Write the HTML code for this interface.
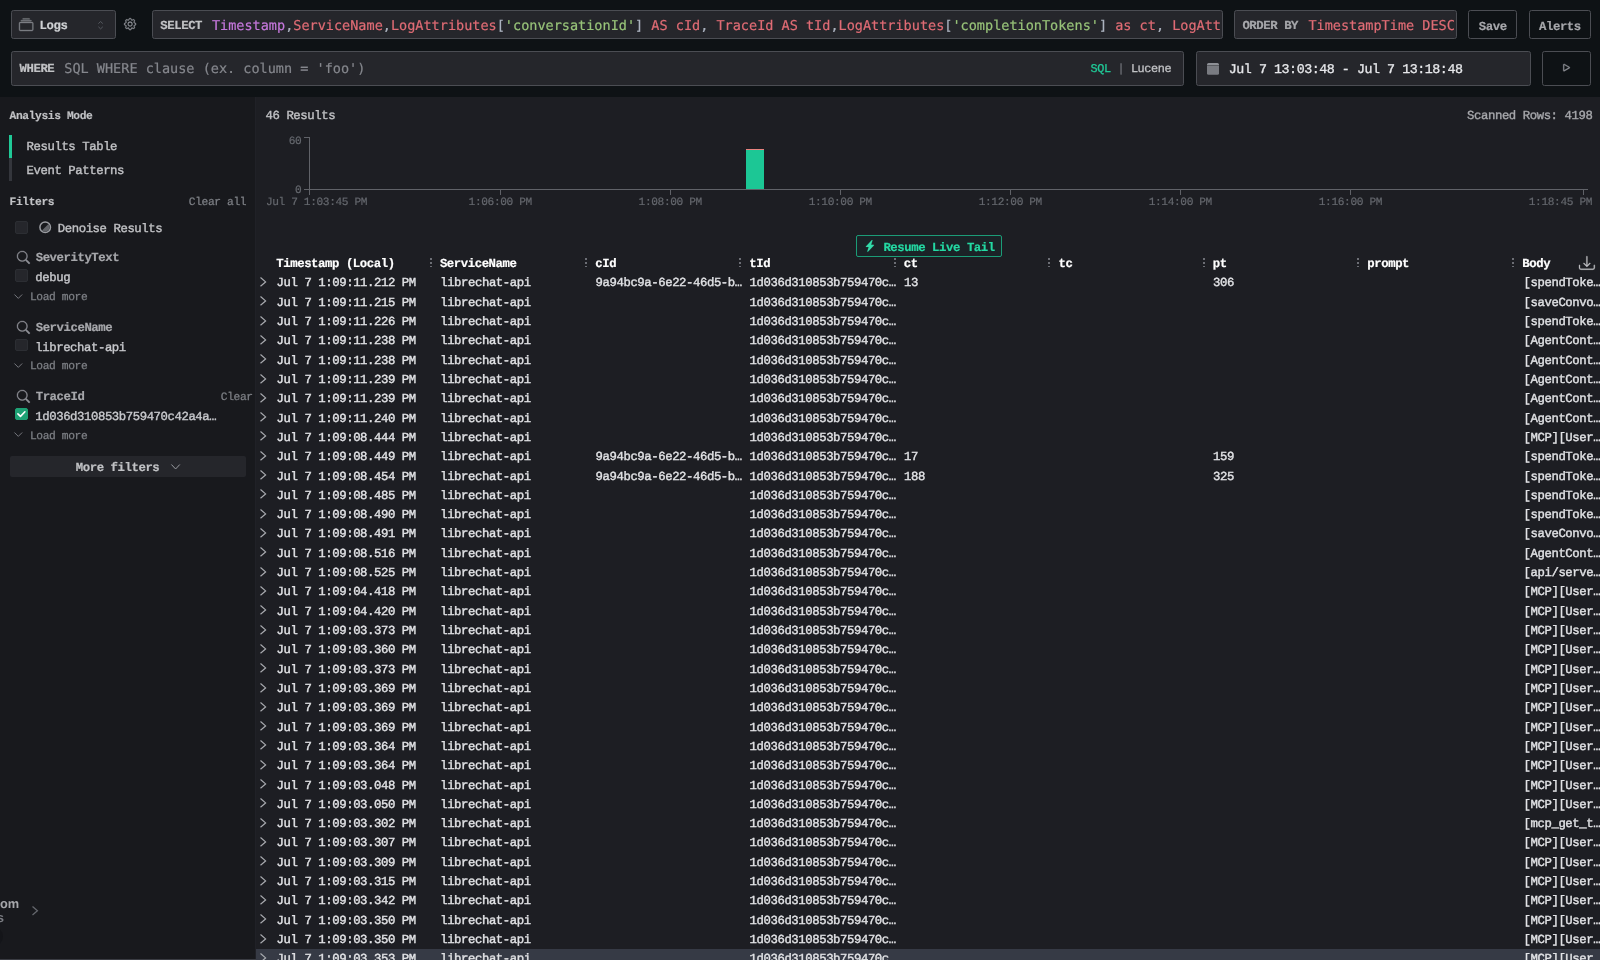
<!DOCTYPE html>
<html lang="en"><head><meta charset="utf-8"><title>Logs</title>
<style>
*{box-sizing:border-box;margin:0;padding:0}
html,body{width:1600px;height:960px;overflow:hidden;background:#0e1215}
body{position:relative;font-family:"Liberation Mono","DejaVu Sans Mono",monospace;color:#e2e3e6;text-rendering:geometricPrecision}
.t{position:absolute;white-space:pre}
.n{font-size:12.3px;letter-spacing:-.42px;line-height:14px;-webkit-text-stroke:.38px}
.b{font-size:12.3px;letter-spacing:-.42px;line-height:14px;font-weight:700;-webkit-text-stroke:.2px}
.s{font-size:11.27px;letter-spacing:-.385px;line-height:13px;-webkit-text-stroke:.25px}
.sb{font-size:11.27px;letter-spacing:-.385px;line-height:13px;font-weight:700;-webkit-text-stroke:.15px}
.d{font-size:13.33px;letter-spacing:-.46px;line-height:15px;-webkit-text-stroke:.3px}
.l{font-size:11.18px;letter-spacing:-.38px;line-height:13px;-webkit-text-stroke:.2px}
.q{font-size:11.87px;letter-spacing:-.40px;line-height:14px;-webkit-text-stroke:.3px}
.code{font-family:"DejaVu Sans Mono","Liberation Mono",monospace;font-size:13.53px;line-height:16px;-webkit-text-stroke:.2px}
.box{position:absolute;background:#25262b;border:1px solid #4b4d53;border-radius:2.5px}
.btn{position:absolute;background:#0e1215;border:1px solid #4b4d53;border-radius:2.5px}
#side{position:absolute;left:0;top:96.6px;width:255px;height:863.4px;background:#18191d}
#main{position:absolute;left:255px;top:96.6px;width:1345px;height:863.4px;background:#1d1e23}
.kw{color:#c678dd}.id{color:#e06c75}.st{color:#98c379}.pl{color:#abb2bf}
.g{color:#7e8086}
.chk{position:absolute;width:12.8px;height:12.6px;border-radius:2px;background:#25262b;border:1px solid #2c2e33}
svg{position:absolute;overflow:visible}
#app{position:absolute;left:0;top:0;width:1600px;height:960px;will-change:transform}
</style></head>
<body>
<div id="bg">
<div id="side"></div><div id="main"></div>
<div style="position:absolute;left:254.6px;top:96.6px;width:1.2px;height:863.4px;background:#202127"></div>
<div class="box" style="left:11.3px;top:10.2px;width:104.5px;height:28.8px"></div>
<div class="box" style="left:152px;top:10.2px;width:1070.8px;height:28.8px"></div>
<div class="box" style="left:1234px;top:10.2px;width:222.9px;height:28.8px"></div>
<div class="btn" style="left:1468.4px;top:10.2px;width:48.5px;height:28.8px"></div>
<div class="btn" style="left:1529.1px;top:10.2px;width:62px;height:28.8px"></div>
<div class="box" style="left:11.3px;top:50.5px;width:1173px;height:35.4px"></div>
<div class="box" style="left:1196.3px;top:50.5px;width:334.6px;height:35.4px"></div>
<div class="btn" style="left:1542.3px;top:50.5px;width:48.7px;height:35.4px"></div>
<div style="position:absolute;left:9.2px;top:135px;width:2.4px;height:45.8px;background:#34363c"></div>
<div style="position:absolute;left:9.2px;top:135px;width:2.4px;height:23px;background:#20c997"></div>
<div class="chk" style="left:15.2px;top:221px"></div>
<div class="chk" style="left:15.1px;top:269.0px"></div>
<div class="chk" style="left:15.1px;top:338.5px"></div>
<div class="chk" style="left:15.1px;top:407.9px;background:#1ea175;border-color:#1ea175"></div>
<div style="position:absolute;left:9.7px;top:456.3px;width:236.1px;height:20.7px;background:#25262b;border-radius:2px"></div>
<div style="position:absolute;left:-16px;top:927px;width:18.5px;height:18.5px;border-radius:10px;background:#141519"></div>
<div style="position:absolute;left:0;top:958.6px;width:1600px;height:1.4px;background:#3a3c43"></div>
<div style="position:absolute;left:308.5px;top:137px;width:1.1px;height:58px;background:#606268"></div>
<div style="position:absolute;left:303.8px;top:188.5px;width:1284px;height:1.1px;background:#606268"></div>
<div style="position:absolute;left:303.8px;top:137px;width:5px;height:1.1px;background:#606268"></div>
<div style="position:absolute;left:499.8px;top:189px;width:1.1px;height:6px;background:#606268"></div>
<div style="position:absolute;left:669.8px;top:189px;width:1.1px;height:6px;background:#606268"></div>
<div style="position:absolute;left:839.9px;top:189px;width:1.1px;height:6px;background:#606268"></div>
<div style="position:absolute;left:1009.9px;top:189px;width:1.1px;height:6px;background:#606268"></div>
<div style="position:absolute;left:1179.9px;top:189px;width:1.1px;height:6px;background:#606268"></div>
<div style="position:absolute;left:1350.0px;top:189px;width:1.1px;height:6px;background:#606268"></div>
<div style="position:absolute;left:1582.9px;top:189px;width:1.1px;height:6px;background:#606268"></div>
<div style="position:absolute;left:746.3px;top:148.8px;width:17.5px;height:40.6px;background:#1cc795"></div>
<div style="position:absolute;left:746.3px;top:148.8px;width:17.5px;height:1px;background:#e8837f"></div>
<div style="position:absolute;left:856.3px;top:234.6px;width:145.7px;height:22.2px;background:#1b2327;border:1px solid #1b9c77;border-radius:2px"></div>
<div style="position:absolute;left:429.7px;top:257.8px;width:2px;height:9.6px;background:repeating-linear-gradient(#6c6e75 0 2px,transparent 2px 3.8px)"></div>
<div style="position:absolute;left:585.1px;top:257.8px;width:2px;height:9.6px;background:repeating-linear-gradient(#6c6e75 0 2px,transparent 2px 3.8px)"></div>
<div style="position:absolute;left:739.1px;top:257.8px;width:2px;height:9.6px;background:repeating-linear-gradient(#6c6e75 0 2px,transparent 2px 3.8px)"></div>
<div style="position:absolute;left:893.5px;top:257.8px;width:2px;height:9.6px;background:repeating-linear-gradient(#6c6e75 0 2px,transparent 2px 3.8px)"></div>
<div style="position:absolute;left:1048.4px;top:257.8px;width:2px;height:9.6px;background:repeating-linear-gradient(#6c6e75 0 2px,transparent 2px 3.8px)"></div>
<div style="position:absolute;left:1202.6px;top:257.8px;width:2px;height:9.6px;background:repeating-linear-gradient(#6c6e75 0 2px,transparent 2px 3.8px)"></div>
<div style="position:absolute;left:1357.1px;top:257.8px;width:2px;height:9.6px;background:repeating-linear-gradient(#6c6e75 0 2px,transparent 2px 3.8px)"></div>
<div style="position:absolute;left:1512.1px;top:257.8px;width:2px;height:9.6px;background:repeating-linear-gradient(#6c6e75 0 2px,transparent 2px 3.8px)"></div>
<div style="position:absolute;left:256px;top:948.7px;width:1344px;height:20px;background:#363a45"></div>
</div>
<div id="app">
<svg style="left:18.70px;top:17.60px" width="14.30" height="14.30" viewBox="0 0 16 16" fill="#7c7e84" stroke="#7c7e84" stroke-width="0.45"><path d="M2.5 3.5a.5.5 0 0 1 0-1h11a.5.5 0 0 1 0 1h-11zm2-2a.5.5 0 0 1 0-1h7a.5.5 0 0 1 0 1h-7zM0 13a1.5 1.5 0 0 0 1.5 1.5h13A1.5 1.5 0 0 0 16 13V6a1.5 1.5 0 0 0-1.5-1.5h-13A1.5 1.5 0 0 0 0 6v7zm1.5.5A.5.5 0 0 1 1 13V6a.5.5 0 0 1 .5-.5h13a.5.5 0 0 1 .5.5v7a.5.5 0 0 1-.5.5h-13z"/></svg>
<div class="t b " style="left:39.60px;top:19px;color:#cfd1d4">Logs</div>
<svg style="left:98.2px;top:20.8px" width="5.2" height="8.4" viewBox="0 0 5.2 8.4" fill="none" stroke="#5c5f66" stroke-width=".9"><path d="M.4 2.6 2.6.5 4.8 2.6M.4 5.8 2.6 7.9 4.8 5.8"/></svg>
<svg style="left:123.70px;top:18.30px" width="12.20" height="12.20" viewBox="0 0 16 16" fill="#8e9096" stroke="#8e9096" stroke-width="0.45"><path d="M8 4.754a3.246 3.246 0 1 0 0 6.492 3.246 3.246 0 0 0 0-6.492zM5.754 8a2.246 2.246 0 1 1 4.492 0 2.246 2.246 0 0 1-4.492 0z"/><path d="M9.796 1.343c-.527-1.79-3.065-1.79-3.592 0l-.094.319a.873.873 0 0 1-1.255.52l-.292-.16c-1.64-.892-3.433.902-2.54 2.541l.159.292a.873.873 0 0 1-.52 1.255l-.319.094c-1.79.527-1.79 3.065 0 3.592l.319.094a.873.873 0 0 1 .52 1.255l-.16.292c-.892 1.64.901 3.434 2.541 2.54l.292-.159a.873.873 0 0 1 1.255.52l.094.319c.527 1.79 3.065 1.79 3.592 0l.094-.319a.873.873 0 0 1 1.255-.52l.292.16c1.64.893 3.434-.902 2.54-2.541l-.159-.292a.873.873 0 0 1 .52-1.255l.319-.094c1.79-.527 1.79-3.065 0-3.592l-.319-.094a.873.873 0 0 1-.52-1.255l.16-.292c.893-1.64-.902-3.433-2.541-2.54l-.292.159a.873.873 0 0 1-1.255-.52l-.094-.319zm-2.633.283c.246-.835 1.428-.835 1.674 0l.094.319a1.873 1.873 0 0 0 2.693 1.115l.291-.16c.764-.415 1.6.42 1.184 1.185l-.159.292a1.873 1.873 0 0 0 1.116 2.692l.318.094c.835.246.835 1.428 0 1.674l-.319.094a1.873 1.873 0 0 0-1.115 2.693l.16.291c.415.764-.42 1.6-1.185 1.184l-.291-.159a1.873 1.873 0 0 0-2.693 1.116l-.094.318c-.246.835-1.428.835-1.674 0l-.094-.319a1.873 1.873 0 0 0-2.692-1.115l-.292.16c-.764.415-1.6-.42-1.184-1.185l.159-.291A1.873 1.873 0 0 0 1.945 8.93l-.319-.094c-.835-.246-.835-1.428 0-1.674l.319-.094A1.873 1.873 0 0 0 3.06 4.377l-.16-.292c-.415-.764.42-1.6 1.185-1.184l.292.159a1.873 1.873 0 0 0 2.692-1.115l.094-.319z"/></svg>
<div class="t b " style="left:160.30px;top:19px;color:#c1c2c5">SELECT</div>
<div class="t code " style="left:211.90px;top:18px;width:1010.5px;overflow:hidden"><span class="kw">Timestamp</span><span class="pl">,</span><span class="id">ServiceName</span><span class="pl">,</span><span class="id">LogAttributes</span><span class="pl">[</span><span class="st">'conversationId'</span><span class="pl">]</span><span class="id"> AS cId</span><span class="pl">,</span><span class="id"> TraceId AS tId</span><span class="pl">,</span><span class="id">LogAttributes</span><span class="pl">[</span><span class="st">'completionTokens'</span><span class="pl">]</span><span class="id"> as ct</span><span class="pl">,</span><span class="id"> LogAtt</span></div>
<div class="t b " style="left:1242.40px;top:19px;color:#a6a7ab">ORDER BY</div>
<div class="t code id" style="left:1308.40px;top:18px;">TimestampTime DESC</div>
<div class="t b " style="left:1478.80px;top:20px;color:#a6a7ab">Save</div>
<div class="t b " style="left:1539.00px;top:20px;color:#a6a7ab">Alerts</div>
<div class="t b " style="left:19.50px;top:62px;color:#c1c2c5">WHERE</div>
<div class="t code " style="left:64.30px;top:61px;color:#85878d">SQL WHERE clause (ex. column = 'foo')</div>
<div class="t q " style="left:1090.60px;top:62px;"><span style="color:#20c997">SQL</span><span style="color:#6c6f75"> | </span><span style="color:#c1c2c5">Lucene</span></div>
<svg style="left:1207.3px;top:62.7px" width="12" height="11.8" viewBox="0 0 12 11.8"><path d="M1.6 0h8.8A1.6 1.6 0 0 1 12 1.6V2.5H0V1.6A1.6 1.6 0 0 1 1.6 0z" fill="#8e9096"/><path d="M0 3.1h12v7.1a1.6 1.6 0 0 1-1.6 1.6H1.6A1.6 1.6 0 0 1 0 10.2z" fill="#797b81"/></svg>
<div class="t d " style="left:1228.80px;top:63px;color:#e6e7ea">Jul 7 13:03:48 - Jul 7 13:18:48</div>
<svg style="left:1559.60px;top:61.40px" width="13.20" height="13.20" viewBox="0 0 16 16" fill="#8e9096" stroke="#8e9096" stroke-width="0.45"><path d="M10.804 8 5 4.633v6.734L10.804 8zm.792-.696a.802.802 0 0 1 0 1.392l-6.363 3.692C4.713 12.69 4 12.345 4 11.692V4.308c0-.653.713-.998 1.233-.696l6.363 3.692z"/></svg>
<div class="t sb " style="left:9.50px;top:111px;color:#c1c2c5">Analysis Mode</div>
<div class="t n " style="left:26.60px;top:140px;color:#c1c2c5">Results Table</div>
<div class="t n " style="left:26.60px;top:164px;color:#c1c2c5">Event Patterns</div>
<div class="t sb " style="left:9.50px;top:197px;color:#c1c2c5">Filters</div>
<div class="t s g" style="left:188.80px;top:197px;">Clear all</div>
<svg style="left:39px;top:221.4px" width="12.4" height="12.4" viewBox="0 0 12.4 12.4"><circle cx="6.2" cy="6.2" r="5.3" fill="none" stroke="#9a9ca1" stroke-width="1.5"/><path d="M2.9 9.5A4.67 4.67 0 0 0 9.5 2.9z" fill="#626469"/></svg>
<div class="t n " style="left:57.80px;top:222px;color:#c1c2c5">Denoise Results</div>
<svg style="left:17.10px;top:251.20px" width="12.90" height="12.90" viewBox="0 0 16 16" fill="#8e9096" stroke="#8e9096" stroke-width="0.45"><path d="M11.742 10.344a6.5 6.5 0 1 0-1.397 1.398h-.001c.03.04.062.078.098.115l3.85 3.85a1 1 0 0 0 1.415-1.414l-3.85-3.85a1.007 1.007 0 0 0-.115-.1zM12 6.5a5.5 5.5 0 1 1-11 0 5.5 5.5 0 0 1 11 0z"/></svg>
<div class="t b " style="left:35.70px;top:251px;color:#a6a7ab">SeverityText</div>
<div class="t n " style="left:35.30px;top:271px;color:#c8c9cd">debug</div>
<svg style="left:14.3px;top:293.50px" width="8.6" height="5.2" viewBox="0 0 8.6 5.2" fill="none" stroke="#7c7e84" stroke-width=".95"><path d="M.4.5 4.3 4.4 8.2.5"/></svg>
<div class="t s g" style="left:29.90px;top:292px;">Load more</div>
<svg style="left:17.10px;top:320.70px" width="12.90" height="12.90" viewBox="0 0 16 16" fill="#8e9096" stroke="#8e9096" stroke-width="0.45"><path d="M11.742 10.344a6.5 6.5 0 1 0-1.397 1.398h-.001c.03.04.062.078.098.115l3.85 3.85a1 1 0 0 0 1.415-1.414l-3.85-3.85a1.007 1.007 0 0 0-.115-.1zM12 6.5a5.5 5.5 0 1 1-11 0 5.5 5.5 0 0 1 11 0z"/></svg>
<div class="t b " style="left:35.70px;top:321px;color:#a6a7ab">ServiceName</div>
<div class="t n " style="left:35.30px;top:341px;color:#c8c9cd">librechat-api</div>
<svg style="left:14.3px;top:363.00px" width="8.6" height="5.2" viewBox="0 0 8.6 5.2" fill="none" stroke="#7c7e84" stroke-width=".95"><path d="M.4.5 4.3 4.4 8.2.5"/></svg>
<div class="t s g" style="left:29.90px;top:361px;">Load more</div>
<svg style="left:17.10px;top:390.10px" width="12.90" height="12.90" viewBox="0 0 16 16" fill="#8e9096" stroke="#8e9096" stroke-width="0.45"><path d="M11.742 10.344a6.5 6.5 0 1 0-1.397 1.398h-.001c.03.04.062.078.098.115l3.85 3.85a1 1 0 0 0 1.415-1.414l-3.85-3.85a1.007 1.007 0 0 0-.115-.1zM12 6.5a5.5 5.5 0 1 1-11 0 5.5 5.5 0 0 1 11 0z"/></svg>
<div class="t b " style="left:35.70px;top:390px;color:#a6a7ab">TraceId</div>
<div class="t n " style="left:35.30px;top:410px;color:#c8c9cd">1d036d310853b759470c42a4a…</div>
<svg style="left:15.1px;top:407.9px" width="12.8" height="12.6" viewBox="0 0 12.8 12.6" fill="none" stroke="#fff" stroke-width="1.6" stroke-linecap="round" stroke-linejoin="round"><path d="M2.9 5.9 5.5 8.4 9.9 3.8"/></svg>
<svg style="left:14.3px;top:432.40px" width="8.6" height="5.2" viewBox="0 0 8.6 5.2" fill="none" stroke="#7c7e84" stroke-width=".95"><path d="M.4.5 4.3 4.4 8.2.5"/></svg>
<div class="t s g" style="left:29.90px;top:431px;">Load more</div>
<div class="t s g" style="left:220.80px;top:392px;">Clear</div>
<div class="t b " style="left:75.80px;top:461px;color:#c1c2c5">More filters</div>
<svg style="left:170.8px;top:464.2px" width="9.2" height="5.8" viewBox="0 0 9.2 5.8" fill="none" stroke="#9a9ca1" stroke-width="1"><path d="M.4.5 4.6 5 8.8.5"/></svg>
<div class="t x" style="left:0;top:897px;font-family:'Liberation Sans',sans-serif;font-weight:700;font-size:12.8px;line-height:14px;color:#a6a7ab">om</div>
<div class="t x" style="left:-3.2px;top:910.5px;font-family:'Liberation Sans',sans-serif;font-weight:700;font-size:13px;line-height:14px;color:#7a7c82">s</div>
<svg style="left:32px;top:906px" width="6" height="9.4" viewBox="0 0 6 9.4" fill="none" stroke="#64676d" stroke-width="1.3"><path d="M.5.5 5.4 4.7.5 8.9"/></svg>
<div class="t n " style="left:265.50px;top:109px;color:#c1c2c5">46 Results</div>
<div class="t n " style="left:1467.10px;top:109px;color:#a6a7ab">Scanned Rows: 4198</div>
<div class="t l " style="left:288.80px;top:136px;color:#64676d">60</div>
<div class="t l " style="left:295.10px;top:185px;color:#64676d">0</div>
<div class="t l " style="left:265.90px;top:197px;color:#64676d">Jul 7 1:03:45 PM</div>
<div class="t l " style="left:468.60px;top:197px;color:#64676d">1:06:00 PM</div>
<div class="t l " style="left:638.60px;top:197px;color:#64676d">1:08:00 PM</div>
<div class="t l " style="left:808.70px;top:197px;color:#64676d">1:10:00 PM</div>
<div class="t l " style="left:978.70px;top:197px;color:#64676d">1:12:00 PM</div>
<div class="t l " style="left:1148.70px;top:197px;color:#64676d">1:14:00 PM</div>
<div class="t l " style="left:1318.80px;top:197px;color:#64676d">1:16:00 PM</div>
<div class="t l " style="left:1528.80px;top:197px;color:#64676d">1:18:45 PM</div>
<svg style="left:863.90px;top:239.70px" width="11.80" height="11.80" viewBox="0 0 16 16" fill="#33dcaa" stroke="#33dcaa" stroke-width="0.2"><path d="M11.251.068a.5.5 0 0 1 .227.58L9.677 6.5H13a.5.5 0 0 1 .364.843l-8 8.5a.5.5 0 0 1-.842-.49L6.323 9.5H3a.5.5 0 0 1-.364-.843l8-8.5a.5.5 0 0 1 .615-.09z"/></svg>
<div class="t b " style="left:883.40px;top:241px;color:#24d9a3">Resume Live Tail</div>
<div class="t b " style="left:276.30px;top:257px;color:#fff">Timestamp (Local)</div>
<div class="t b " style="left:439.90px;top:257px;color:#fff">ServiceName</div>
<div class="t b " style="left:595.30px;top:257px;color:#fff">cId</div>
<div class="t b " style="left:749.30px;top:257px;color:#fff">tId</div>
<div class="t b " style="left:903.70px;top:257px;color:#fff">ct</div>
<div class="t b " style="left:1058.60px;top:257px;color:#fff">tc</div>
<div class="t b " style="left:1212.80px;top:257px;color:#fff">pt</div>
<div class="t b " style="left:1367.30px;top:257px;color:#fff">prompt</div>
<div class="t b " style="left:1522.30px;top:257px;color:#fff">Body</div>
<svg style="left:1579.20px;top:255.00px" width="15.80" height="15.80" viewBox="0 0 16 16" fill="#c1c2c5" stroke="#c1c2c5" stroke-width="0.3"><path d="M.5 9.9a.5.5 0 0 1 .5.5v2.5a1 1 0 0 0 1 1h12a1 1 0 0 0 1-1v-2.5a.5.5 0 0 1 1 0v2.5a2 2 0 0 1-2 2H2a2 2 0 0 1-2-2v-2.5a.5.5 0 0 1 .5-.5z"/><path d="M7.646 11.854a.5.5 0 0 0 .708 0l3-3a.5.5 0 0 0-.708-.708L8.5 10.293V1.5a.5.5 0 0 0-1 0v8.793L5.354 8.146a.5.5 0 1 0-.708.708l3 3z"/></svg>
<svg style="left:260.1px;top:277.00px" width="6.2" height="9.8" viewBox="0 0 6.2 9.8" fill="none" stroke="#a9abb0" stroke-width="1.2"><path d="M.5.5 5.6 4.9.5 9.3"/></svg>
<div class="t n " style="left:276.60px;top:276px;">Jul 7 1:09:11.212 PM</div>
<div class="t n " style="left:440.20px;top:276px;">librechat-api</div>
<div class="t n " style="left:595.60px;top:276px;">9a94bc9a-6e22-46d5-b…</div>
<div class="t n " style="left:904.00px;top:276px;">13</div>
<div class="t n " style="left:1213.10px;top:276px;">306</div>
<div class="t n " style="left:749.60px;top:276px;">1d036d310853b759470c…</div>
<div class="t n " style="left:1523.60px;top:276px;">[spendToke…</div>
<svg style="left:260.1px;top:296.31px" width="6.2" height="9.8" viewBox="0 0 6.2 9.8" fill="none" stroke="#a9abb0" stroke-width="1.2"><path d="M.5.5 5.6 4.9.5 9.3"/></svg>
<div class="t n " style="left:276.60px;top:296px;">Jul 7 1:09:11.215 PM</div>
<div class="t n " style="left:440.20px;top:296px;">librechat-api</div>
<div class="t n " style="left:749.60px;top:296px;">1d036d310853b759470c…</div>
<div class="t n " style="left:1523.60px;top:296px;">[saveConvo…</div>
<svg style="left:260.1px;top:315.62px" width="6.2" height="9.8" viewBox="0 0 6.2 9.8" fill="none" stroke="#a9abb0" stroke-width="1.2"><path d="M.5.5 5.6 4.9.5 9.3"/></svg>
<div class="t n " style="left:276.60px;top:315px;">Jul 7 1:09:11.226 PM</div>
<div class="t n " style="left:440.20px;top:315px;">librechat-api</div>
<div class="t n " style="left:749.60px;top:315px;">1d036d310853b759470c…</div>
<div class="t n " style="left:1523.60px;top:315px;">[spendToke…</div>
<svg style="left:260.1px;top:334.93px" width="6.2" height="9.8" viewBox="0 0 6.2 9.8" fill="none" stroke="#a9abb0" stroke-width="1.2"><path d="M.5.5 5.6 4.9.5 9.3"/></svg>
<div class="t n " style="left:276.60px;top:334px;">Jul 7 1:09:11.238 PM</div>
<div class="t n " style="left:440.20px;top:334px;">librechat-api</div>
<div class="t n " style="left:749.60px;top:334px;">1d036d310853b759470c…</div>
<div class="t n " style="left:1523.60px;top:334px;">[AgentCont…</div>
<svg style="left:260.1px;top:354.24px" width="6.2" height="9.8" viewBox="0 0 6.2 9.8" fill="none" stroke="#a9abb0" stroke-width="1.2"><path d="M.5.5 5.6 4.9.5 9.3"/></svg>
<div class="t n " style="left:276.60px;top:354px;">Jul 7 1:09:11.238 PM</div>
<div class="t n " style="left:440.20px;top:354px;">librechat-api</div>
<div class="t n " style="left:749.60px;top:354px;">1d036d310853b759470c…</div>
<div class="t n " style="left:1523.60px;top:354px;">[AgentCont…</div>
<svg style="left:260.1px;top:373.55px" width="6.2" height="9.8" viewBox="0 0 6.2 9.8" fill="none" stroke="#a9abb0" stroke-width="1.2"><path d="M.5.5 5.6 4.9.5 9.3"/></svg>
<div class="t n " style="left:276.60px;top:373px;">Jul 7 1:09:11.239 PM</div>
<div class="t n " style="left:440.20px;top:373px;">librechat-api</div>
<div class="t n " style="left:749.60px;top:373px;">1d036d310853b759470c…</div>
<div class="t n " style="left:1523.60px;top:373px;">[AgentCont…</div>
<svg style="left:260.1px;top:392.86px" width="6.2" height="9.8" viewBox="0 0 6.2 9.8" fill="none" stroke="#a9abb0" stroke-width="1.2"><path d="M.5.5 5.6 4.9.5 9.3"/></svg>
<div class="t n " style="left:276.60px;top:392px;">Jul 7 1:09:11.239 PM</div>
<div class="t n " style="left:440.20px;top:392px;">librechat-api</div>
<div class="t n " style="left:749.60px;top:392px;">1d036d310853b759470c…</div>
<div class="t n " style="left:1523.60px;top:392px;">[AgentCont…</div>
<svg style="left:260.1px;top:412.17px" width="6.2" height="9.8" viewBox="0 0 6.2 9.8" fill="none" stroke="#a9abb0" stroke-width="1.2"><path d="M.5.5 5.6 4.9.5 9.3"/></svg>
<div class="t n " style="left:276.60px;top:412px;">Jul 7 1:09:11.240 PM</div>
<div class="t n " style="left:440.20px;top:412px;">librechat-api</div>
<div class="t n " style="left:749.60px;top:412px;">1d036d310853b759470c…</div>
<div class="t n " style="left:1523.60px;top:412px;">[AgentCont…</div>
<svg style="left:260.1px;top:431.48px" width="6.2" height="9.8" viewBox="0 0 6.2 9.8" fill="none" stroke="#a9abb0" stroke-width="1.2"><path d="M.5.5 5.6 4.9.5 9.3"/></svg>
<div class="t n " style="left:276.60px;top:431px;">Jul 7 1:09:08.444 PM</div>
<div class="t n " style="left:440.20px;top:431px;">librechat-api</div>
<div class="t n " style="left:749.60px;top:431px;">1d036d310853b759470c…</div>
<div class="t n " style="left:1523.60px;top:431px;">[MCP][User…</div>
<svg style="left:260.1px;top:450.79px" width="6.2" height="9.8" viewBox="0 0 6.2 9.8" fill="none" stroke="#a9abb0" stroke-width="1.2"><path d="M.5.5 5.6 4.9.5 9.3"/></svg>
<div class="t n " style="left:276.60px;top:450px;">Jul 7 1:09:08.449 PM</div>
<div class="t n " style="left:440.20px;top:450px;">librechat-api</div>
<div class="t n " style="left:595.60px;top:450px;">9a94bc9a-6e22-46d5-b…</div>
<div class="t n " style="left:904.00px;top:450px;">17</div>
<div class="t n " style="left:1213.10px;top:450px;">159</div>
<div class="t n " style="left:749.60px;top:450px;">1d036d310853b759470c…</div>
<div class="t n " style="left:1523.60px;top:450px;">[spendToke…</div>
<svg style="left:260.1px;top:470.10px" width="6.2" height="9.8" viewBox="0 0 6.2 9.8" fill="none" stroke="#a9abb0" stroke-width="1.2"><path d="M.5.5 5.6 4.9.5 9.3"/></svg>
<div class="t n " style="left:276.60px;top:470px;">Jul 7 1:09:08.454 PM</div>
<div class="t n " style="left:440.20px;top:470px;">librechat-api</div>
<div class="t n " style="left:595.60px;top:470px;">9a94bc9a-6e22-46d5-b…</div>
<div class="t n " style="left:904.00px;top:470px;">188</div>
<div class="t n " style="left:1213.10px;top:470px;">325</div>
<div class="t n " style="left:749.60px;top:470px;">1d036d310853b759470c…</div>
<div class="t n " style="left:1523.60px;top:470px;">[spendToke…</div>
<svg style="left:260.1px;top:489.41px" width="6.2" height="9.8" viewBox="0 0 6.2 9.8" fill="none" stroke="#a9abb0" stroke-width="1.2"><path d="M.5.5 5.6 4.9.5 9.3"/></svg>
<div class="t n " style="left:276.60px;top:489px;">Jul 7 1:09:08.485 PM</div>
<div class="t n " style="left:440.20px;top:489px;">librechat-api</div>
<div class="t n " style="left:749.60px;top:489px;">1d036d310853b759470c…</div>
<div class="t n " style="left:1523.60px;top:489px;">[spendToke…</div>
<svg style="left:260.1px;top:508.72px" width="6.2" height="9.8" viewBox="0 0 6.2 9.8" fill="none" stroke="#a9abb0" stroke-width="1.2"><path d="M.5.5 5.6 4.9.5 9.3"/></svg>
<div class="t n " style="left:276.60px;top:508px;">Jul 7 1:09:08.490 PM</div>
<div class="t n " style="left:440.20px;top:508px;">librechat-api</div>
<div class="t n " style="left:749.60px;top:508px;">1d036d310853b759470c…</div>
<div class="t n " style="left:1523.60px;top:508px;">[spendToke…</div>
<svg style="left:260.1px;top:528.03px" width="6.2" height="9.8" viewBox="0 0 6.2 9.8" fill="none" stroke="#a9abb0" stroke-width="1.2"><path d="M.5.5 5.6 4.9.5 9.3"/></svg>
<div class="t n " style="left:276.60px;top:527px;">Jul 7 1:09:08.491 PM</div>
<div class="t n " style="left:440.20px;top:527px;">librechat-api</div>
<div class="t n " style="left:749.60px;top:527px;">1d036d310853b759470c…</div>
<div class="t n " style="left:1523.60px;top:527px;">[saveConvo…</div>
<svg style="left:260.1px;top:547.34px" width="6.2" height="9.8" viewBox="0 0 6.2 9.8" fill="none" stroke="#a9abb0" stroke-width="1.2"><path d="M.5.5 5.6 4.9.5 9.3"/></svg>
<div class="t n " style="left:276.60px;top:547px;">Jul 7 1:09:08.516 PM</div>
<div class="t n " style="left:440.20px;top:547px;">librechat-api</div>
<div class="t n " style="left:749.60px;top:547px;">1d036d310853b759470c…</div>
<div class="t n " style="left:1523.60px;top:547px;">[AgentCont…</div>
<svg style="left:260.1px;top:566.65px" width="6.2" height="9.8" viewBox="0 0 6.2 9.8" fill="none" stroke="#a9abb0" stroke-width="1.2"><path d="M.5.5 5.6 4.9.5 9.3"/></svg>
<div class="t n " style="left:276.60px;top:566px;">Jul 7 1:09:08.525 PM</div>
<div class="t n " style="left:440.20px;top:566px;">librechat-api</div>
<div class="t n " style="left:749.60px;top:566px;">1d036d310853b759470c…</div>
<div class="t n " style="left:1523.60px;top:566px;">[api/serve…</div>
<svg style="left:260.1px;top:585.96px" width="6.2" height="9.8" viewBox="0 0 6.2 9.8" fill="none" stroke="#a9abb0" stroke-width="1.2"><path d="M.5.5 5.6 4.9.5 9.3"/></svg>
<div class="t n " style="left:276.60px;top:585px;">Jul 7 1:09:04.418 PM</div>
<div class="t n " style="left:440.20px;top:585px;">librechat-api</div>
<div class="t n " style="left:749.60px;top:585px;">1d036d310853b759470c…</div>
<div class="t n " style="left:1523.60px;top:585px;">[MCP][User…</div>
<svg style="left:260.1px;top:605.27px" width="6.2" height="9.8" viewBox="0 0 6.2 9.8" fill="none" stroke="#a9abb0" stroke-width="1.2"><path d="M.5.5 5.6 4.9.5 9.3"/></svg>
<div class="t n " style="left:276.60px;top:605px;">Jul 7 1:09:04.420 PM</div>
<div class="t n " style="left:440.20px;top:605px;">librechat-api</div>
<div class="t n " style="left:749.60px;top:605px;">1d036d310853b759470c…</div>
<div class="t n " style="left:1523.60px;top:605px;">[MCP][User…</div>
<svg style="left:260.1px;top:624.58px" width="6.2" height="9.8" viewBox="0 0 6.2 9.8" fill="none" stroke="#a9abb0" stroke-width="1.2"><path d="M.5.5 5.6 4.9.5 9.3"/></svg>
<div class="t n " style="left:276.60px;top:624px;">Jul 7 1:09:03.373 PM</div>
<div class="t n " style="left:440.20px;top:624px;">librechat-api</div>
<div class="t n " style="left:749.60px;top:624px;">1d036d310853b759470c…</div>
<div class="t n " style="left:1523.60px;top:624px;">[MCP][User…</div>
<svg style="left:260.1px;top:643.89px" width="6.2" height="9.8" viewBox="0 0 6.2 9.8" fill="none" stroke="#a9abb0" stroke-width="1.2"><path d="M.5.5 5.6 4.9.5 9.3"/></svg>
<div class="t n " style="left:276.60px;top:643px;">Jul 7 1:09:03.360 PM</div>
<div class="t n " style="left:440.20px;top:643px;">librechat-api</div>
<div class="t n " style="left:749.60px;top:643px;">1d036d310853b759470c…</div>
<div class="t n " style="left:1523.60px;top:643px;">[MCP][User…</div>
<svg style="left:260.1px;top:663.20px" width="6.2" height="9.8" viewBox="0 0 6.2 9.8" fill="none" stroke="#a9abb0" stroke-width="1.2"><path d="M.5.5 5.6 4.9.5 9.3"/></svg>
<div class="t n " style="left:276.60px;top:663px;">Jul 7 1:09:03.373 PM</div>
<div class="t n " style="left:440.20px;top:663px;">librechat-api</div>
<div class="t n " style="left:749.60px;top:663px;">1d036d310853b759470c…</div>
<div class="t n " style="left:1523.60px;top:663px;">[MCP][User…</div>
<svg style="left:260.1px;top:682.51px" width="6.2" height="9.8" viewBox="0 0 6.2 9.8" fill="none" stroke="#a9abb0" stroke-width="1.2"><path d="M.5.5 5.6 4.9.5 9.3"/></svg>
<div class="t n " style="left:276.60px;top:682px;">Jul 7 1:09:03.369 PM</div>
<div class="t n " style="left:440.20px;top:682px;">librechat-api</div>
<div class="t n " style="left:749.60px;top:682px;">1d036d310853b759470c…</div>
<div class="t n " style="left:1523.60px;top:682px;">[MCP][User…</div>
<svg style="left:260.1px;top:701.82px" width="6.2" height="9.8" viewBox="0 0 6.2 9.8" fill="none" stroke="#a9abb0" stroke-width="1.2"><path d="M.5.5 5.6 4.9.5 9.3"/></svg>
<div class="t n " style="left:276.60px;top:701px;">Jul 7 1:09:03.369 PM</div>
<div class="t n " style="left:440.20px;top:701px;">librechat-api</div>
<div class="t n " style="left:749.60px;top:701px;">1d036d310853b759470c…</div>
<div class="t n " style="left:1523.60px;top:701px;">[MCP][User…</div>
<svg style="left:260.1px;top:721.13px" width="6.2" height="9.8" viewBox="0 0 6.2 9.8" fill="none" stroke="#a9abb0" stroke-width="1.2"><path d="M.5.5 5.6 4.9.5 9.3"/></svg>
<div class="t n " style="left:276.60px;top:721px;">Jul 7 1:09:03.369 PM</div>
<div class="t n " style="left:440.20px;top:721px;">librechat-api</div>
<div class="t n " style="left:749.60px;top:721px;">1d036d310853b759470c…</div>
<div class="t n " style="left:1523.60px;top:721px;">[MCP][User…</div>
<svg style="left:260.1px;top:740.44px" width="6.2" height="9.8" viewBox="0 0 6.2 9.8" fill="none" stroke="#a9abb0" stroke-width="1.2"><path d="M.5.5 5.6 4.9.5 9.3"/></svg>
<div class="t n " style="left:276.60px;top:740px;">Jul 7 1:09:03.364 PM</div>
<div class="t n " style="left:440.20px;top:740px;">librechat-api</div>
<div class="t n " style="left:749.60px;top:740px;">1d036d310853b759470c…</div>
<div class="t n " style="left:1523.60px;top:740px;">[MCP][User…</div>
<svg style="left:260.1px;top:759.75px" width="6.2" height="9.8" viewBox="0 0 6.2 9.8" fill="none" stroke="#a9abb0" stroke-width="1.2"><path d="M.5.5 5.6 4.9.5 9.3"/></svg>
<div class="t n " style="left:276.60px;top:759px;">Jul 7 1:09:03.364 PM</div>
<div class="t n " style="left:440.20px;top:759px;">librechat-api</div>
<div class="t n " style="left:749.60px;top:759px;">1d036d310853b759470c…</div>
<div class="t n " style="left:1523.60px;top:759px;">[MCP][User…</div>
<svg style="left:260.1px;top:779.06px" width="6.2" height="9.8" viewBox="0 0 6.2 9.8" fill="none" stroke="#a9abb0" stroke-width="1.2"><path d="M.5.5 5.6 4.9.5 9.3"/></svg>
<div class="t n " style="left:276.60px;top:779px;">Jul 7 1:09:03.048 PM</div>
<div class="t n " style="left:440.20px;top:779px;">librechat-api</div>
<div class="t n " style="left:749.60px;top:779px;">1d036d310853b759470c…</div>
<div class="t n " style="left:1523.60px;top:779px;">[MCP][User…</div>
<svg style="left:260.1px;top:798.37px" width="6.2" height="9.8" viewBox="0 0 6.2 9.8" fill="none" stroke="#a9abb0" stroke-width="1.2"><path d="M.5.5 5.6 4.9.5 9.3"/></svg>
<div class="t n " style="left:276.60px;top:798px;">Jul 7 1:09:03.050 PM</div>
<div class="t n " style="left:440.20px;top:798px;">librechat-api</div>
<div class="t n " style="left:749.60px;top:798px;">1d036d310853b759470c…</div>
<div class="t n " style="left:1523.60px;top:798px;">[MCP][User…</div>
<svg style="left:260.1px;top:817.68px" width="6.2" height="9.8" viewBox="0 0 6.2 9.8" fill="none" stroke="#a9abb0" stroke-width="1.2"><path d="M.5.5 5.6 4.9.5 9.3"/></svg>
<div class="t n " style="left:276.60px;top:817px;">Jul 7 1:09:03.302 PM</div>
<div class="t n " style="left:440.20px;top:817px;">librechat-api</div>
<div class="t n " style="left:749.60px;top:817px;">1d036d310853b759470c…</div>
<div class="t n " style="left:1523.60px;top:817px;">[mcp_get_t…</div>
<svg style="left:260.1px;top:836.99px" width="6.2" height="9.8" viewBox="0 0 6.2 9.8" fill="none" stroke="#a9abb0" stroke-width="1.2"><path d="M.5.5 5.6 4.9.5 9.3"/></svg>
<div class="t n " style="left:276.60px;top:836px;">Jul 7 1:09:03.307 PM</div>
<div class="t n " style="left:440.20px;top:836px;">librechat-api</div>
<div class="t n " style="left:749.60px;top:836px;">1d036d310853b759470c…</div>
<div class="t n " style="left:1523.60px;top:836px;">[MCP][User…</div>
<svg style="left:260.1px;top:856.30px" width="6.2" height="9.8" viewBox="0 0 6.2 9.8" fill="none" stroke="#a9abb0" stroke-width="1.2"><path d="M.5.5 5.6 4.9.5 9.3"/></svg>
<div class="t n " style="left:276.60px;top:856px;">Jul 7 1:09:03.309 PM</div>
<div class="t n " style="left:440.20px;top:856px;">librechat-api</div>
<div class="t n " style="left:749.60px;top:856px;">1d036d310853b759470c…</div>
<div class="t n " style="left:1523.60px;top:856px;">[MCP][User…</div>
<svg style="left:260.1px;top:875.61px" width="6.2" height="9.8" viewBox="0 0 6.2 9.8" fill="none" stroke="#a9abb0" stroke-width="1.2"><path d="M.5.5 5.6 4.9.5 9.3"/></svg>
<div class="t n " style="left:276.60px;top:875px;">Jul 7 1:09:03.315 PM</div>
<div class="t n " style="left:440.20px;top:875px;">librechat-api</div>
<div class="t n " style="left:749.60px;top:875px;">1d036d310853b759470c…</div>
<div class="t n " style="left:1523.60px;top:875px;">[MCP][User…</div>
<svg style="left:260.1px;top:894.92px" width="6.2" height="9.8" viewBox="0 0 6.2 9.8" fill="none" stroke="#a9abb0" stroke-width="1.2"><path d="M.5.5 5.6 4.9.5 9.3"/></svg>
<div class="t n " style="left:276.60px;top:894px;">Jul 7 1:09:03.342 PM</div>
<div class="t n " style="left:440.20px;top:894px;">librechat-api</div>
<div class="t n " style="left:749.60px;top:894px;">1d036d310853b759470c…</div>
<div class="t n " style="left:1523.60px;top:894px;">[MCP][User…</div>
<svg style="left:260.1px;top:914.23px" width="6.2" height="9.8" viewBox="0 0 6.2 9.8" fill="none" stroke="#a9abb0" stroke-width="1.2"><path d="M.5.5 5.6 4.9.5 9.3"/></svg>
<div class="t n " style="left:276.60px;top:914px;">Jul 7 1:09:03.350 PM</div>
<div class="t n " style="left:440.20px;top:914px;">librechat-api</div>
<div class="t n " style="left:749.60px;top:914px;">1d036d310853b759470c…</div>
<div class="t n " style="left:1523.60px;top:914px;">[MCP][User…</div>
<svg style="left:260.1px;top:933.54px" width="6.2" height="9.8" viewBox="0 0 6.2 9.8" fill="none" stroke="#a9abb0" stroke-width="1.2"><path d="M.5.5 5.6 4.9.5 9.3"/></svg>
<div class="t n " style="left:276.60px;top:933px;">Jul 7 1:09:03.350 PM</div>
<div class="t n " style="left:440.20px;top:933px;">librechat-api</div>
<div class="t n " style="left:749.60px;top:933px;">1d036d310853b759470c…</div>
<div class="t n " style="left:1523.60px;top:933px;">[MCP][User…</div>
<svg style="left:260.1px;top:952.85px" width="6.2" height="9.8" viewBox="0 0 6.2 9.8" fill="none" stroke="#a9abb0" stroke-width="1.2"><path d="M.5.5 5.6 4.9.5 9.3"/></svg>
<div class="t n " style="left:276.60px;top:952px;">Jul 7 1:09:03.353 PM</div>
<div class="t n " style="left:440.20px;top:952px;">librechat-api</div>
<div class="t n " style="left:749.60px;top:952px;">1d036d310853b759470c…</div>
<div class="t n " style="left:1523.60px;top:952px;">[MCP][User…</div>
</div>
</body></html>
